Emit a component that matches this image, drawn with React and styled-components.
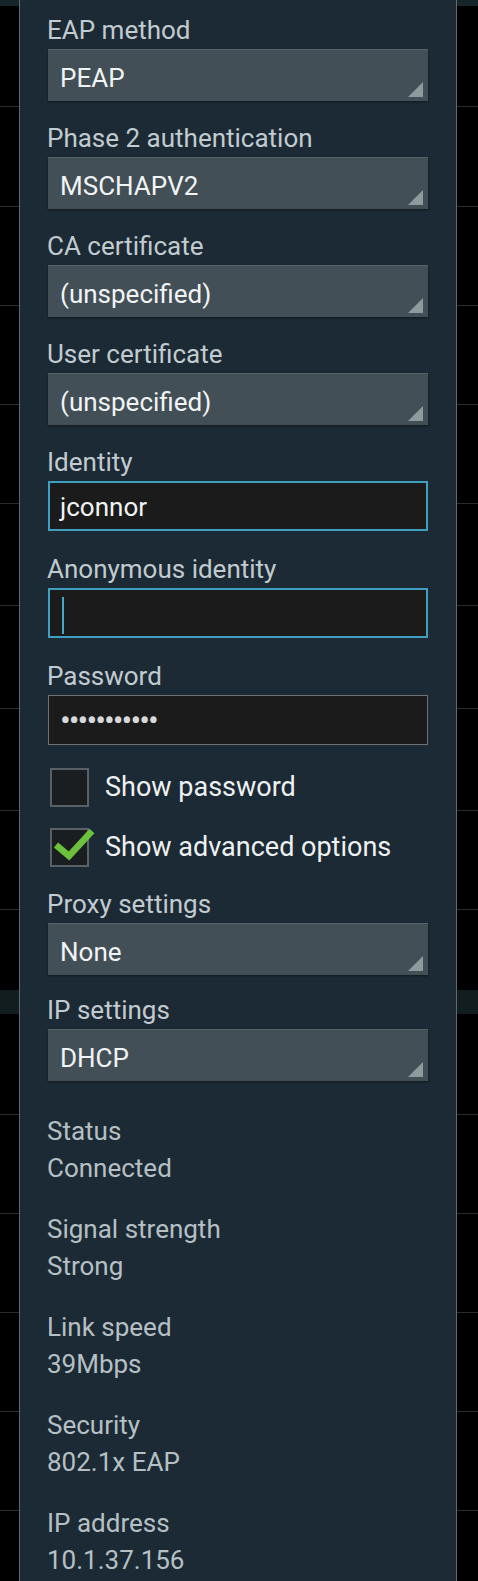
import React from "react";
import styled, { createGlobalStyle } from "styled-components";

const GlobalStyle = createGlobalStyle`
  html, body {
    margin: 0;
    padding: 0;
    background: #000;
  }
  * {
    box-sizing: border-box;
  }
`;

const Screen = styled.div`
  position: relative;
  width: 478px;
  height: 1581px;
  overflow: hidden;
  background: #000;
  font-family: Roboto, "Liberation Sans", sans-serif;
`;

// list behind the dialog
const Backdrop = styled.div`
  display: flex;
  flex-direction: column;
  height: 100%;
`;

const TopBand = styled.div`
  height: 6px;
  flex: none;
  background: #172529;
`;

const ListRow = styled.div`
  height: ${(p) => p.$h}px;
  flex: ${(p) => (p.$h ? "none" : 1)};
  border-bottom: ${(p) => (p.$line ? "1px solid #2c2c2c" : "none")};
`;

const SectionBand = styled.div`
  height: 24px;
  flex: none;
  background: #121d20;
`;

const Dialog = styled.div`
  position: absolute;
  top: 0;
  left: 19px;
  width: 438px;
  height: 100%;
  background: #1c2a35;
  border-left: 1px solid #5d6a72;
  border-right: 1px solid #5d6a72;
  padding: 15px 28px 0 27px;
`;

const Label = styled.div`
  font-size: 26px;
  line-height: 30px;
  color: #c2cbcf;
  margin-bottom: 4px;
`;

const Field = styled.div`
  margin-bottom: ${(p) => p.$mb}px;
`;

const Spinner = styled.div`
  position: relative;
  margin-left: 1px;
  height: 52px;
  padding: 4px 0 0 12px;
  line-height: 48px;
  font-size: 26px;
  color: #f1f4f5;
  background: #434f56;
  border-top: 1px solid #58646b;
  box-shadow: 0 1px 2px rgba(0, 0, 0, 0.45);
`;

const Corner = styled.svg`
  position: absolute;
  right: 5px;
  bottom: 4px;
`;

const TextBox = styled.div`
  margin-left: 1px;
  height: 50px;
  padding: 2px 0 0 10px;
  line-height: 44px;
  font-size: 26px;
  color: #f1f4f5;
  background: #1b1b1b;
  border: ${(p) => (p.$focused ? "2px solid #3f9fc0" : "1px solid #6c7275")};
`;

const Caret = styled.span`
  display: inline-block;
  width: 2px;
  height: 37px;
  margin: 5px 0 0 2px;
  vertical-align: top;
  background: #44a8ca;
`;

const Dots = styled.span`
  display: inline-block;
  padding-left: 1px;
  letter-spacing: -2px;
  font-size: 32px;
  color: #d6d8d9;
  line-height: 44px;
`;

const CheckRow = styled.div`
  display: flex;
  align-items: center;
  height: 60px;
  padding-left: 3px;
  gap: 16px;
  font-size: 27px;
  color: #eef2f3;
`;

const Box = styled.div`
  position: relative;
  width: 39px;
  height: 39px;
  flex: none;
  background: #1b1e21;
  border: 2px solid #596168;
`;

const Tick = styled.svg`
  position: absolute;
  left: -2px;
  top: -2px;
  overflow: visible;
`;

const Spacer = styled.div`
  height: ${(p) => p.$h}px;
`;

const InfoItem = styled.div`
  margin-bottom: 24px;
  font-size: 26px;
  line-height: 37px;
  color: #b6c0c4;
`;

const Checkbox = ({ checked }) => (
  <Box>
    {checked && (
      <Tick width="44" height="40" viewBox="0 0 44 40">
        <polyline
          points="6,17 19,28 42,3"
          fill="none"
          stroke="#6cc23c"
          strokeWidth="6.5"
        />
      </Tick>
    )}
  </Box>
);

const SpinnerField = ({ label, value, mb = 22 }) => (
  <Field $mb={mb}>
    <Label>{label}</Label>
    <Spinner>
      {value}
      <Corner width="15" height="15" viewBox="0 0 15 15">
        <polygon points="15,0 15,15 0,15" fill="#8d9a9f" />
      </Corner>
    </Spinner>
  </Field>
);

const backRows = [
  [101, true],
  [100, true],
  [99, true],
  [99, true],
  [99, true],
  [102, true],
  [103, true],
  [102, true],
  [99, true],
  [80, false],
];

const backRowsAfter = [
  [101, true],
  [99, true],
  [99, true],
  [99, true],
  [99, true],
];

const info = [
  ["Status", "Connected"],
  ["Signal strength", "Strong"],
  ["Link speed", "39Mbps"],
  ["Security", "802.1x EAP"],
  ["IP address", "10.1.37.156"],
];

export default function App() {
  return (
    <Screen>
      <GlobalStyle />
      <Backdrop>
        <TopBand />
        {backRows.map(([h, line], i) => (
          <ListRow key={i} $h={h} $line={line} />
        ))}
        <SectionBand />
        {backRowsAfter.map(([h, line], i) => (
          <ListRow key={"b" + i} $h={h} $line={line} />
        ))}
        <ListRow />
      </Backdrop>

      <Dialog>
        <SpinnerField label="EAP method" value="PEAP" />
        <SpinnerField label="Phase 2 authentication" value="MSCHAPV2" />
        <SpinnerField label="CA certificate" value="(unspecified)" />
        <SpinnerField label="User certificate" value="(unspecified)" />

        <Field $mb={23}>
          <Label>Identity</Label>
          <TextBox $focused>jconnor</TextBox>
        </Field>
        <Field $mb={23}>
          <Label>Anonymous identity</Label>
          <TextBox $focused>
            <Caret />
          </TextBox>
        </Field>
        <Field $mb={12}>
          <Label>Password</Label>
          <TextBox>
            <Dots>•••••••••••</Dots>
          </TextBox>
        </Field>

        <CheckRow>
          <Checkbox />
          Show password
        </CheckRow>
        <CheckRow>
          <Checkbox checked />
          Show advanced options
        </CheckRow>

        <Spacer $h={12} />
        <SpinnerField label="Proxy settings" value="None" mb={20} />
        <SpinnerField label="IP settings" value="DHCP" mb={32} />

        {info.map(([k, v]) => (
          <InfoItem key={k}>
            <div>{k}</div>
            <div>{v}</div>
          </InfoItem>
        ))}
      </Dialog>
    </Screen>
  );
}
